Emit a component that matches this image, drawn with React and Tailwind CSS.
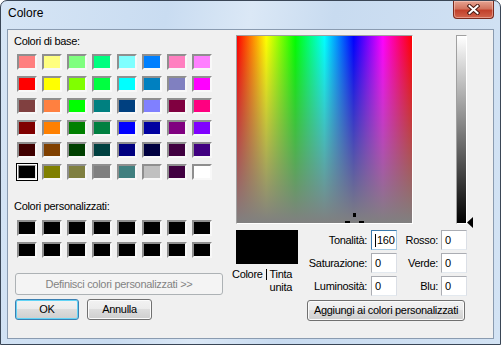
import clsx from "clsx";

const BASE = [
  "#ff8080", "#ffff80", "#80ff80", "#00ff80", "#80ffff", "#0080ff", "#ff80c0", "#ff80ff",
  "#ff0000", "#ffff00", "#80ff00", "#00ff40", "#00ffff", "#0080c0", "#8080c0", "#ff00ff",
  "#804040", "#ff8040", "#00ff00", "#008080", "#004080", "#8080ff", "#800040", "#ff0080",
  "#800000", "#ff8000", "#008000", "#008040", "#0000ff", "#0000a0", "#800080", "#8000ff",
  "#400000", "#804000", "#004000", "#004040", "#000080", "#000040", "#400040", "#400080",
  "#000000", "#808000", "#808040", "#808080", "#408080", "#c0c0c0", "#400040", "#ffffff",
];

const CUSTOM = Array.from({ length: 16 }, () => "#000000");

const Swatch = ({ color, selected }) =>
  selected ? (
    <div className="w-[20px] h-[16px] border border-white shadow-[0_0_0_1px_#000]">
      <div
        className="w-full h-full border border-[#8a8a8a] border-b-[#e6e6e6] border-r-[#e6e6e6]"
        style={{ backgroundColor: color }}
      />
    </div>
  ) : (
    <div
      className="w-[20px] h-[16px] border-2 border-[#8f8f8f] border-b-[#f8f8f8] border-r-[#f8f8f8]"
      style={{ backgroundColor: color }}
    />
  );

const WinButton = ({ children, className, isDefault, disabled }) => (
  <div
    className={clsx(
      "flex items-center justify-center rounded-[3px] border whitespace-nowrap",
      disabled
        ? "border-[#adb2b5] bg-[#f4f4f4] text-[#838383]"
        : isDefault
        ? "border-[#3c7fb1] shadow-[inset_0_0_0_1px_#62d4f6] bg-[linear-gradient(#f2f2f2,#ebebeb_50%,#dddddd_50%,#cfcfcf)]"
        : "border-[#707070] shadow-[inset_0_0_0_1px_#fbfbfb] bg-[linear-gradient(#f2f2f2,#ebebeb_50%,#dddddd_50%,#cfcfcf)]",
      className
    )}
  >
    {children}
  </div>
);

const Field = ({ value, focused }) => (
  <div
    className={clsx(
      "h-[20px] w-[26px] bg-white border pl-[3px] leading-[18px] flex items-center",
      focused
        ? "border-[#3d7bad] border-b-[#a4c9e3] border-r-[#a4c9e3]"
        : "border-[#abadb3] border-b-[#e3e9ef] border-r-[#dbdfe6]"
    )}
  >
    {focused && <span className="inline-block w-px h-[13px] bg-black mr-px" />}
    {value}
  </div>
);

const Label = ({ children, pr }) => (
  <div className={clsx("h-[20px] flex items-center justify-end whitespace-nowrap", pr)}>
    {children}
  </div>
);

export default function App() {
  return (
    <div className="w-[501px] h-[345px] flex flex-col rounded-t-[7px] border border-[#3a4656] bg-[linear-gradient(100deg,#d6e5f5,#c9dcf1_30%,#dbe8f6_45%,#c8dbf0_60%,#d3e3f4)] font-['Liberation_Sans',Arial,sans-serif] text-black overflow-hidden">
      <div className="h-[28px] flex items-start justify-between">
        <span className="ml-[7px] mt-[5px] text-[12px] leading-[15px]">Colore</span>
        <div className="mr-[6px] w-[41px] h-[18px] rounded-b-[4px] border border-t-0 border-[#7a2a1d] bg-[linear-gradient(#e6a391,#d2745f_45%,#c2412b_55%,#d1644c)] shadow-[inset_0_0_0_1px_rgba(255,220,210,0.45)] flex items-center justify-center">
          <svg width="13" height="11" viewBox="0 0 13 11">
            <path d="M2.5 2 L10.5 9 M10.5 2 L2.5 9" stroke="#4b1a12" strokeWidth="4" strokeLinecap="square" />
            <path d="M2.5 2 L10.5 9 M10.5 2 L2.5 9" stroke="#ffffff" strokeWidth="2" strokeLinecap="square" />
          </svg>
        </div>
      </div>

      <div className="mx-[6px] mb-[5px] flex-1 flex border border-[#8a9bb0] bg-[#f0f0f0] text-[11px] leading-[13px] tracking-[-0.3px]">
        {/* left column */}
        <div className="w-[228px] pl-[6px] pt-[5px] flex flex-col">
          <div className="h-[13px]">Colori di base:</div>
          <div className="mt-[6px] ml-[3px] grid grid-cols-[repeat(8,20px)] gap-x-[5px] gap-y-[6px]">
            {BASE.map((c, i) => (
              <Swatch key={i} color={c} selected={i === 40} />
            ))}
          </div>

          <div className="mt-[20px] h-[13px]">Colori personalizzati:</div>
          <div className="mt-[7px] ml-[3px] grid grid-cols-[repeat(8,20px)] gap-x-[5px] gap-y-[6px]">
            {CUSTOM.map((c, i) => (
              <Swatch key={i} color={c} />
            ))}
          </div>

          <WinButton disabled className="mt-[15px] ml-[1px] w-[208px] h-[22px]">
            Definisci colori personalizzati &gt;&gt;
          </WinButton>

          <div className="mt-[4px] ml-[1px] flex gap-[8px]">
            <WinButton isDefault className="w-[64px] h-[21px]">
              OK
            </WinButton>
            <WinButton className="w-[65px] h-[21px]">Annulla</WinButton>
          </div>
        </div>

        {/* right column */}
        <div className="pt-[5px] flex flex-col">
          <div className="flex">
            <div className="w-[177px] h-[189px] border border-[#a0a0a0] border-b-white border-r-white bg-[linear-gradient(to_right,#ff0000,#ffff00,#00ff00,#00ffff,#0000ff,#ff00ff,#ff0000)]">
              <div className="relative w-full h-full overflow-hidden bg-[linear-gradient(to_bottom,rgba(128,128,128,0),#808080)]">
                <div className="absolute left-[116px] top-[177px] w-[3px] h-[4px] bg-black" />
                <div className="absolute left-[108px] top-[185px] w-[5px] h-[3px] bg-black" />
                <div className="absolute left-[122px] top-[185px] w-[5px] h-[3px] bg-black" />
              </div>
            </div>
            <div className="relative ml-[43px] w-[11px] h-[189px] border border-[#a0a0a0] border-b-white border-r-white bg-[linear-gradient(#ffffff,#000000)]">
              <svg
                className="absolute left-[10px] top-[181px]"
                width="7"
                height="11"
                viewBox="0 0 7 11"
              >
                <path d="M0 5.5 L6 0 L6 11 Z" fill="#000" />
              </svg>
            </div>
          </div>

          <div className="mt-[6px] flex">
            <div className="w-[62px] flex flex-col">
              <div className="h-[34px] bg-black" />
              <div className="mt-[4px] -ml-[4px] flex whitespace-nowrap">
                <span>Colore</span>
                <div className="ml-[3px] flex flex-col">
                  <span className="flex items-center">
                    <span className="inline-block w-px h-[11px] bg-black mr-[3px]" />
                    Tinta
                  </span>
                  <span className="pl-[4px]">unita</span>
                </div>
              </div>
            </div>

            <div className="flex flex-col">
              <div className="grid grid-cols-[73px_26px_44px_26px] gap-y-[3px]">
                <Label pr="pr-[4px]">Tonalità:</Label>
                <Field value="160" focused />
                <Label pr="pr-[3px]">Rosso:</Label>
                <Field value="0" />

                <Label pr="pr-[4px]">Saturazione:</Label>
                <Field value="0" />
                <Label pr="pr-[3px]">Verde:</Label>
                <Field value="0" />

                <Label pr="pr-[4px]">Luminosità:</Label>
                <Field value="0" />
                <Label pr="pr-[3px]">Blu:</Label>
                <Field value="0" />
              </div>
              <WinButton className="mt-[4px] ml-[9px] w-[158px] h-[21px]">
                Aggiungi ai colori personalizzati
              </WinButton>
            </div>
          </div>
        </div>
      </div>
    </div>
  );
}
